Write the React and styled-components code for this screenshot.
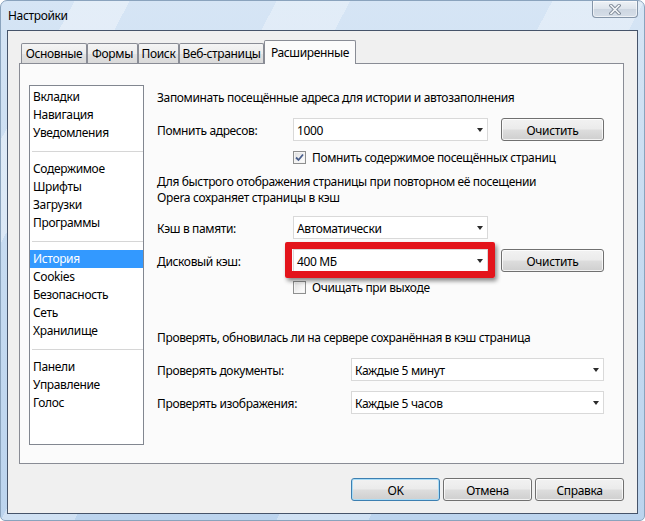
import React from 'react';
import styled, { createGlobalStyle } from 'styled-components';

const Global = createGlobalStyle`
  html, body { margin: 0; padding: 0; background: #ffffff; }
  body {
    font-family: "Noto Sans", "Open Sans", "DejaVu Sans", sans-serif;
    font-size: 12px;
    letter-spacing: -0.35px;
    color: #000;
  }
  #root { width: 645px; height: 521px; }
  * { box-sizing: border-box; }
`;

const Window = styled.div`
  width: 645px;
  height: 521px;
  display: flex;
  flex-direction: column;
  padding: 0 6px 6px 6px;
  border: 1px solid #8aa3bd;
  border-radius: 7px 7px 5px 5px;
  background:
    linear-gradient(118deg, rgba(255,255,255,0) 0 8%, rgba(255,255,255,0.35) 8% 14%, rgba(255,255,255,0) 14% 30%,
      rgba(255,255,255,0.3) 30% 38%, rgba(255,255,255,0) 38% 60%, rgba(255,255,255,0.3) 60% 70%, rgba(255,255,255,0) 70% 100%),
    linear-gradient(180deg, #d6e5f5 0%, #c8dcf1 40%, #bcd4ee 100%);
  overflow: hidden;
`;

const TitleBar = styled.div`
  height: 29px;
  flex: none;
  display: flex;
  justify-content: space-between;
  align-items: flex-start;
`;

const Title = styled.div`
  padding: 7px 0 0 1px;
  line-height: 16px;
  font-size: 12px;
`;

const CloseButton = styled.div`
  width: 46px;
  height: 17px;
  border: 1px solid #8595a8;
  border-top: none;
  border-radius: 0 0 4px 4px;
  background: linear-gradient(180deg, #eef2f6 0%, #dde4ec 50%, #cdd6e1 51%, #d6dee8 100%);
  box-shadow: inset 0 0 0 1px rgba(255,255,255,0.6);
  display: flex;
  align-items: center;
  justify-content: center;
`;

const Client = styled.div`
  flex: 1;
  display: flex;
  flex-direction: column;
  border: 1px solid #46546a;
  background: #f0f0f0;
  padding: 9px 13px 0 11px;
`;

const TabStrip = styled.div`
  display: flex;
  align-items: flex-end;
  height: 23px;
  padding-left: 2px;
  position: relative;
  z-index: 2;
`;

const Tab = styled.div`
  width: ${p => p.$w}px;
  height: ${p => (p.$active ? 24 : 20)}px;
  margin-bottom: ${p => (p.$active ? -1 : 0)}px;
  border: 1px solid #898c95;
  border-bottom: none;
  border-radius: 2px 2px 0 0;
  background: ${p => (p.$active ? '#fbfbfb' : 'linear-gradient(180deg, #f4f4f4 0%, #ececec 50%, #e2e2e2 51%, #dadada 100%)')};
  display: flex;
  align-items: flex-start;
  padding-top: ${p => (p.$active ? 4 : 2)}px;
  justify-content: center;
  white-space: nowrap;
  line-height: 16px;
`;

const Panel = styled.div`
  height: 401px;
  flex: none;
  border: 1px solid #898c95;
  background: #fbfbfb;
  display: flex;
  align-items: flex-start;
  padding: 21px 0 0 9px;
`;

const CategoryList = styled.div`
  width: 115px;
  height: 360px;
  flex: none;
  border: 1px solid #828790;
  background: #fff;
  padding: 2px 0;
`;

const Item = styled.div`
  height: 18px;
  line-height: 18px;
  padding-left: 3px;
  white-space: nowrap;
  background: ${p => (p.$selected ? '#3399ff' : 'transparent')};
  color: ${p => (p.$selected ? '#fff' : '#000')};
`;

const Separator = styled.div`
  height: 18px;
  display: flex;
  align-items: center;
  padding-left: 2px;
  &::after {
    content: '';
    display: block;
    height: 1px;
    width: 100%;
    background: #d6d6d6;
  }
`;

const Content = styled.div`
  margin-left: 13px;
  margin-top: 5px;
  display: flex;
  flex-direction: column;
`;

const Heading = styled.div`
  line-height: 16px;
  margin-top: ${p => p.$mt || 0}px;
`;

const Row = styled.div`
  display: flex;
  align-items: center;
  height: 23px;
  margin-top: ${p => p.$mt || 0}px;
`;

const Label = styled.div`
  width: ${p => p.$w}px;
  flex: none;
  white-space: nowrap;
  padding-top: 1px;
`;

const SelectWrap = styled.div`
  position: relative;
  width: ${p => p.$w}px;
  height: 23px;
  flex: none;
`;

const Select = styled.div`
  width: 100%;
  height: 100%;
  border: 1px solid #d9d9d9;
  background: #fff;
  display: flex;
  align-items: center;
  justify-content: space-between;
  padding: 1px 4px 0 3px;
  white-space: nowrap;
`;

const Arrow = styled.span`
  width: 0;
  height: 0;
  border-left: 3.5px solid transparent;
  border-right: 3.5px solid transparent;
  border-top: 4px solid #2b2b2b;
`;

const Highlight = styled.div`
  position: absolute;
  top: -7px;
  left: -8px;
  right: -7px;
  bottom: -6px;
  border: 7px solid #e3141b;
  border-radius: 2px;
  box-shadow: 2px 3px 4px rgba(0, 0, 0, 0.45);
  pointer-events: none;
`;

const Button = styled.div`
  width: ${p => p.$w}px;
  height: 23px;
  margin-left: ${p => p.$ml || 0}px;
  flex: none;
  border: 1px solid ${p => (p.$default ? '#3c7fb1' : '#707070')};
  border-radius: 3px;
  background: linear-gradient(180deg, #f2f2f2 0%, #ebebeb 48%, #dddddd 52%, #cfcfcf 100%);
  box-shadow: inset 0 0 0 1px ${p => (p.$default ? '#a9dcf6' : 'rgba(255,255,255,0.75)')};
  display: flex;
  align-items: center;
  justify-content: center;
  padding-top: 1px;
  white-space: nowrap;
`;

const CheckRow = styled.div`
  display: flex;
  align-items: center;
  height: 16px;
  margin-top: ${p => p.$mt || 0}px;
  padding-left: 136px;
`;

const Box = styled.span`
  width: 13px;
  height: 13px;
  flex: none;
  border: 1px solid #8e8f8f;
  background: linear-gradient(135deg, #dcdcdc 0%, #f4f4f4 60%, #ffffff 100%);
  box-shadow: inset 0 0 0 1px #f4f4f4;
  display: flex;
  align-items: center;
  justify-content: center;
  margin-right: 6px;
`;

const Footer = styled.div`
  display: flex;
  justify-content: flex-end;
  gap: 3px;
  margin-top: 14px;
`;

const groups = [
  ['Вкладки', 'Навигация', 'Уведомления'],
  ['Содержимое', 'Шрифты', 'Загрузки', 'Программы'],
  ['История', 'Cookies', 'Безопасность', 'Сеть', 'Хранилище'],
  ['Панели', 'Управление', 'Голос'],
];

const tabs = [
  ['Основные', 66],
  ['Формы', 51],
  ['Поиск', 41],
  ['Веб-страницы', 85],
  ['Расширенные', 92],
];

function Checkbox({ checked, children, mt }) {
  return (
    <CheckRow $mt={mt}>
      <Box>
        {checked && (
          <svg width="9" height="9" viewBox="0 0 9 9">
            <path d="M1 4.5 L3.5 7 L8 1.5" fill="none" stroke="#4a5f8c" strokeWidth="1.8" />
          </svg>
        )}
      </Box>
      {children}
    </CheckRow>
  );
}

function Combo({ w, value, highlight }) {
  return (
    <SelectWrap $w={w}>
      <Select>
        <span>{value}</span>
        <Arrow />
      </Select>
      {highlight && <Highlight />}
    </SelectWrap>
  );
}

export default function App() {
  return (
    <>
      <Global />
      <Window>
        <TitleBar>
          <Title>Настройки</Title>
          <CloseButton>
            <svg width="12" height="11" viewBox="0 0 12 11">
              <path d="M2 1.5 L10 9.5 M10 1.5 L2 9.5" stroke="#7d8896" strokeWidth="3.4" strokeLinecap="square" />
              <path d="M2 1.5 L10 9.5 M10 1.5 L2 9.5" stroke="#f4f6f8" strokeWidth="1.6" strokeLinecap="square" />
            </svg>
          </CloseButton>
        </TitleBar>
        <Client>
          <TabStrip>
            {tabs.map(([t, w], i) => (
              <Tab key={t} $w={w} $active={i === tabs.length - 1}>{t}</Tab>
            ))}
          </TabStrip>
          <Panel>
            <CategoryList>
              {groups.map((g, gi) => (
                <React.Fragment key={gi}>
                  {gi > 0 && <Separator />}
                  {g.map(it => (
                    <Item key={it} $selected={it === 'История'}>{it}</Item>
                  ))}
                </React.Fragment>
              ))}
            </CategoryList>
            <Content>
              <Heading>Запоминать посещённые адреса для истории и автозаполнения</Heading>
              <Row $mt={12}>
                <Label $w={136}>Помнить адресов:</Label>
                <Combo w={195} value="1000" />
                <Button $w={103} $ml={13}>Очистить</Button>
              </Row>
              <Checkbox checked mt={8}>Помнить содержимое посещённых страниц</Checkbox>
              <Heading $mt={9}>
                Для быстрого отображения страницы при повторном её посещении<br />
                Opera сохраняет страницы в кэш
              </Heading>
              <Row $mt={10}>
                <Label $w={136}>Кэш в памяти:</Label>
                <Combo w={195} value="Автоматически" />
              </Row>
              <Row $mt={10}>
                <Label $w={136}>Дисковый кэш:</Label>
                <Combo w={195} value="400 МБ" highlight />
                <Button $w={103} $ml={13}>Очистить</Button>
              </Row>
              <Checkbox mt={7}>Очищать при выходе</Checkbox>
              <Heading $mt={35}>Проверять, обновилась ли на сервере сохранённая в кэш страница</Heading>
              <Row $mt={12}>
                <Label $w={194}>Проверять документы:</Label>
                <Combo w={253} value="Каждые 5 минут" />
              </Row>
              <Row $mt={10}>
                <Label $w={194}>Проверять изображения:</Label>
                <Combo w={253} value="Каждые 5 часов" />
              </Row>
            </Content>
          </Panel>
          <Footer>
            <Button $w={89} $default>OK</Button>
            <Button $w={89}>Отмена</Button>
            <Button $w={89}>Справка</Button>
          </Footer>
        </Client>
      </Window>
    </>
  );
}
